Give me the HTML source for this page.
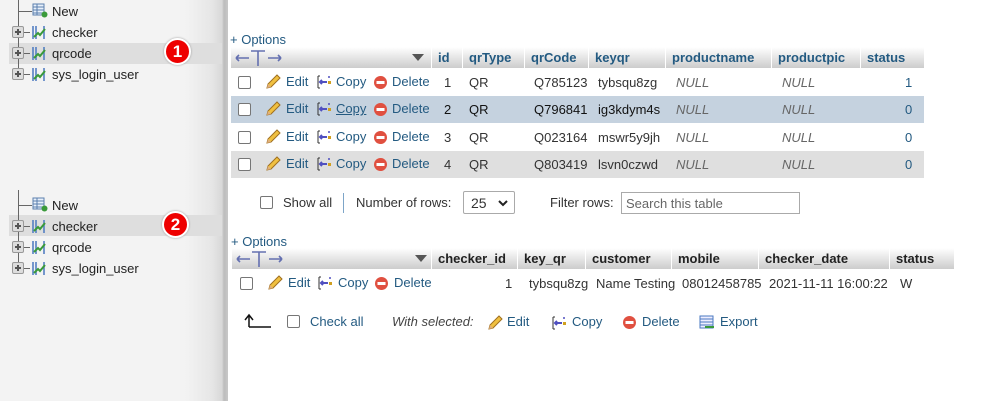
<!DOCTYPE html>
<html><head><meta charset="utf-8"><style>
*{margin:0;padding:0;box-sizing:border-box}
body{width:987px;height:401px;overflow:hidden;background:#fff;font-family:"Liberation Sans",Arial,sans-serif;font-size:13px;color:#333;position:relative}
.a{position:absolute;white-space:nowrap}
#side{position:absolute;left:0;top:0;width:228px;height:401px;background:linear-gradient(to right,#f3f3f3 0,#f3f3f3 185px,#e6e6e6 212px,#d8d8d8 222px,#bcbcbc 224px,#c8c8c8 228px)}
.hl{position:absolute;left:9px;width:213px;height:21px;background:#dedede}
.vl{position:absolute;width:1px;background:#666}
.hlne{position:absolute;height:1px;background:#666}
.plus{position:absolute;width:12px;height:12px;border:1px solid #999;border-radius:2px;background:#ddd}
.plus:before{content:"";position:absolute;left:2px;top:4px;width:6px;height:2px;background:#555}
.plus:after{content:"";position:absolute;left:4px;top:2px;width:2px;height:6px;background:#555}
.ti{position:absolute;width:16px;height:15px}
.badge{position:absolute;width:27px;height:27px;border-radius:50%;background:#e00;border:2px solid #fff;box-shadow:0 0 2px #999;color:#fff;font-weight:bold;font-size:17px;text-align:center;line-height:23px}
.hdr{position:absolute;height:21px;background:linear-gradient(#fff,#ccc)}
.th{position:absolute;top:0;height:21px;line-height:21px;font-weight:bold;color:#235a81;padding-left:6px;border-left:1px solid #fff}
.cb{position:absolute;width:13px;height:13px;border:1px solid #767676;border-radius:2px;background:#fff}
.lk{color:#235a81}
.null{font-style:italic;color:#666}
</style></head><body>
<div id="side">
 <div class="hl" style="top:43px"></div>
 <div class="hl" style="top:215px"></div>
 <div class="vl" style="left:18px;top:0;height:75px"></div>
 <div class="hlne" style="left:18px;top:11px;width:14px"></div>
 <svg class="ti" style="left:32px;top:3px" viewBox="0 0 16 15"><rect x="1" y="1" width="11" height="11" fill="#e8f0fa" stroke="#5b7fae"/><path d="M1 4h11M1 7h11M1 10h11M5 1v11" stroke="#5b7fae"/><circle cx="12.5" cy="11.5" r="3" fill="#3a9a3a"/></svg>
 <span class="a" style="left:52px;top:4px;color:#222">New</span>
 <div class="plus" style="left:12px;top:26px"></div><div class="hlne" style="left:24px;top:32px;width:6px"></div>
 <svg class="ti" style="left:31px;top:25px" viewBox="0 0 16 15"><path d="M2 1v13M5 1v13M13 1v13" stroke="#4a78c0" stroke-width="1.5"/><path d="M3 12l4-4 2 2 5-6" stroke="#3a9a3a" stroke-width="2" fill="none"/></svg>
 <span class="a" style="left:52px;top:25px;color:#222">checker</span>
 <div class="plus" style="left:12px;top:47px"></div><div class="hlne" style="left:24px;top:53px;width:6px"></div>
 <svg class="ti" style="left:31px;top:46px" viewBox="0 0 16 15"><path d="M2 1v13M5 1v13M13 1v13" stroke="#4a78c0" stroke-width="1.5"/><path d="M3 12l4-4 2 2 5-6" stroke="#3a9a3a" stroke-width="2" fill="none"/></svg>
 <span class="a" style="left:52px;top:46px;color:#222">qrcode</span>
 <div class="plus" style="left:12px;top:68px"></div><div class="hlne" style="left:24px;top:74px;width:6px"></div>
 <svg class="ti" style="left:31px;top:67px" viewBox="0 0 16 15"><path d="M2 1v13M5 1v13M13 1v13" stroke="#4a78c0" stroke-width="1.5"/><path d="M3 12l4-4 2 2 5-6" stroke="#3a9a3a" stroke-width="2" fill="none"/></svg>
 <span class="a" style="left:52px;top:67px;color:#222">sys_login_user</span>
 <div class="badge" style="left:164px;top:38px">1</div>
 <div class="vl" style="left:18px;top:190px;height:80px"></div>
 <div class="hlne" style="left:18px;top:205px;width:14px"></div>
 <svg class="ti" style="left:32px;top:197px" viewBox="0 0 16 15"><rect x="1" y="1" width="11" height="11" fill="#e8f0fa" stroke="#5b7fae"/><path d="M1 4h11M1 7h11M1 10h11M5 1v11" stroke="#5b7fae"/><circle cx="12.5" cy="11.5" r="3" fill="#3a9a3a"/></svg>
 <span class="a" style="left:52px;top:198px;color:#222">New</span>
 <div class="plus" style="left:12px;top:220px"></div><div class="hlne" style="left:24px;top:226px;width:6px"></div>
 <svg class="ti" style="left:31px;top:219px" viewBox="0 0 16 15"><path d="M2 1v13M5 1v13M13 1v13" stroke="#4a78c0" stroke-width="1.5"/><path d="M3 12l4-4 2 2 5-6" stroke="#3a9a3a" stroke-width="2" fill="none"/></svg>
 <span class="a" style="left:52px;top:219px;color:#222">checker</span>
 <div class="plus" style="left:12px;top:241px"></div><div class="hlne" style="left:24px;top:247px;width:6px"></div>
 <svg class="ti" style="left:31px;top:240px" viewBox="0 0 16 15"><path d="M2 1v13M5 1v13M13 1v13" stroke="#4a78c0" stroke-width="1.5"/><path d="M3 12l4-4 2 2 5-6" stroke="#3a9a3a" stroke-width="2" fill="none"/></svg>
 <span class="a" style="left:52px;top:240px;color:#222">qrcode</span>
 <div class="plus" style="left:12px;top:262px"></div><div class="hlne" style="left:24px;top:268px;width:6px"></div>
 <svg class="ti" style="left:31px;top:261px" viewBox="0 0 16 15"><path d="M2 1v13M5 1v13M13 1v13" stroke="#4a78c0" stroke-width="1.5"/><path d="M3 12l4-4 2 2 5-6" stroke="#3a9a3a" stroke-width="2" fill="none"/></svg>
 <span class="a" style="left:52px;top:261px;color:#222">sys_login_user</span>
 <div class="badge" style="left:162px;top:211px">2</div>
</div>

<span class="a lk" style="left:230px;top:32px">+ Options</span>
<div class="hdr" style="left:231px;top:47px;width:693px">
 <svg class="a" style="left:2px;top:2px" width="50" height="18"><path d="M3 9h13M3 9l3-3M3 9l3 3M35 9h13M48 9l-3-3M48 9l-3 3M18 2h14M25 2v15" stroke="#6470b0" stroke-width="1.6" fill="none"/></svg>
 <svg class="a" style="left:181px;top:7px" width="12" height="8"><path d="M0 0h12L6 7z" fill="#555"/></svg>
 <div class="th" style="left:200px;width:31px">id</div>
 <div class="th" style="left:231px;width:62px">qrType</div>
 <div class="th" style="left:293px;width:64px">qrCode</div>
 <div class="th" style="left:357px;width:77px">keyqr</div>
 <div class="th" style="left:434px;width:106px">productname</div>
 <div class="th" style="left:540px;width:89px">productpic</div>
 <div class="th" style="left:629px;width:64px">status</div>
</div>
<div id="rows"></div>

<div class="cb" style="left:260px;top:196px"></div>
<span class="a" style="left:283px;top:195px">Show all</span>
<div class="a" style="left:343px;top:193px;width:1px;height:20px;background:#7da5c8"></div>
<span class="a" style="left:356px;top:195px">Number of rows:</span>
<div class="a" style="left:463px;top:191px;width:52px;height:23px;border:1px solid #aaa;border-radius:2px;background:#fff"><span class="a" style="left:7px;top:3px;font-size:14px">25</span><svg class="a" style="left:34px;top:8px" width="10" height="7"><path d="M1 1l4 4 4-4" stroke="#222" stroke-width="2" fill="none"/></svg></div>
<span class="a" style="left:550px;top:195px">Filter rows:</span>
<div class="a" style="left:621px;top:192px;width:179px;height:22px;border:1px solid #aaa;background:#fff"><span class="a" style="left:4px;top:3px;color:#666">Search this table</span></div>

<span class="a lk" style="left:231px;top:234px">+ Options</span>
<div class="hdr" style="left:232px;top:248px;width:722px">
 <svg class="a" style="left:2px;top:2px" width="50" height="18"><path d="M3 9h13M3 9l3-3M3 9l3 3M35 9h13M48 9l-3-3M48 9l-3 3M18 2h14M25 2v15" stroke="#6470b0" stroke-width="1.6" fill="none"/></svg>
 <svg class="a" style="left:183px;top:7px" width="12" height="8"><path d="M0 0h12L6 7z" fill="#555"/></svg>
 <div class="th" style="left:199px;width:86px;color:#222">checker_id</div>
 <div class="th" style="left:285px;width:68px;color:#222">key_qr</div>
 <div class="th" style="left:353px;width:86px;color:#222">customer</div>
 <div class="th" style="left:439px;width:87px;color:#222">mobile</div>
 <div class="th" style="left:526px;width:131px;color:#222">checker_date</div>
 <div class="th" style="left:657px;width:65px;color:#222">status</div>
</div>
<div id="rows2"></div>

<svg class="a" style="left:243px;top:313px" width="30" height="16"><path d="M6 14V3M2 7l4-5 4 5M6 14h22" stroke="#111" stroke-width="1.5" fill="none"/></svg>
<div class="cb" style="left:287px;top:315px"></div>
<span class="a lk" style="left:310px;top:314px">Check all</span>
<span class="a" style="left:392px;top:314px;font-style:italic;color:#444">With selected:</span>
<svg class="a" style="left:487px;top:315px" width="16" height="16" viewBox="0 0 16 16"><path d="M2 14l1-4 9-9 3 3-9 9z" fill="#f0c040" stroke="#a07020"/><path d="M2 14l1-4 3 3z" fill="#e0b080"/></svg>
<span class="a lk" style="left:507px;top:314px">Edit</span>
<svg class="a" style="left:551px;top:315px" width="16" height="16" viewBox="0 0 16 16"><path d="M2 2h2M2 14h2M2 2v12" stroke="#333"/><path d="M4 8h7M6 6l-2 2 2 2" stroke="#5050c0" stroke-width="2" fill="none"/><rect x="12" y="7" width="3" height="3" fill="#d0a020"/><circle cx="13" cy="3" r="1" fill="#5050c0"/></svg>
<span class="a lk" style="left:572px;top:314px">Copy</span>
<svg class="a" style="left:622px;top:315px" width="15" height="15"><circle cx="7.5" cy="7.5" r="6.5" fill="#e05040"/><rect x="3.5" y="6" width="8" height="3" fill="#fff"/></svg>
<span class="a lk" style="left:642px;top:314px">Delete</span>
<svg class="a" style="left:699px;top:315px" width="16" height="15"><rect x="1" y="1" width="13" height="12" fill="#eef" stroke="#4a78c0"/><path d="M1 4h13M1 7h13M1 10h13" stroke="#4a78c0"/><path d="M6 12h9" stroke="#3a9a3a" stroke-width="2"/></svg>
<span class="a lk" style="left:720px;top:314px">Export</span>

<script>
function icons(x,y){
 return `<svg class="a" style="left:${x}px;top:${y}px" width="16" height="16" viewBox="0 0 16 16"><path d="M2 14l1-4 9-9 3 3-9 9z" fill="#f0c040" stroke="#a07020"/><path d="M2 14l1-4 3 3z" fill="#e0b080"/></svg>`;
}
function copyI(x,y){return `<svg class="a" style="left:${x}px;top:${y}px" width="16" height="16" viewBox="0 0 16 16"><path d="M2 2h2M2 14h2M2 2v12" stroke="#333"/><path d="M4 8h7M6 6l-2 2 2 2" stroke="#5050c0" stroke-width="2" fill="none"/><rect x="12" y="7" width="3" height="3" fill="#d0a020"/><circle cx="13" cy="3" r="1" fill="#5050c0"/></svg>`}
function delI(x,y){return `<svg class="a" style="left:${x}px;top:${y}px" width="15" height="15"><circle cx="7.5" cy="7.5" r="6.5" fill="#e05040"/><rect x="3.5" y="6" width="8" height="3" fill="#fff"/></svg>`}
var data=[["1","Q785123","tybsqu8zg","1","#fff"],["2","Q796841","ig3kdym4s","0","#c5d2df"],["3","Q023164","mswr5y9jh","0","#fff"],["4","Q803419","lsvn0czwd","0","#dfdfdf"]];
var h="";
data.forEach(function(d,i){
 var t=69+i*27.3, c=t+13;
 var txt=i==1?"#111":"#333";
 h+=`<div class="a" style="left:231px;top:${t}px;width:693px;height:27px;background:${d[4]}"></div>`;
 h+=`<div class="cb" style="left:238px;top:${c-6}px"></div>`;
 h+=icons(265,c-8)+`<span class="a lk" style="left:286px;top:${c-8}px">Edit</span>`;
 h+=copyI(316,c-8)+`<span class="a lk" style="left:336px;top:${c-8}px${i==1?';text-decoration:underline':''}">Copy</span>`;
 h+=delI(373,c-7)+`<span class="a lk" style="left:392px;top:${c-8}px">Delete</span>`;
 h+=`<span class="a" style="left:444px;top:${c-7}px;color:${txt}">${d[0]}</span>`;
 h+=`<span class="a" style="left:469px;top:${c-7}px;color:${txt}">QR</span>`;
 h+=`<span class="a" style="left:534px;top:${c-7}px;color:${txt}">${d[1]}</span>`;
 h+=`<span class="a" style="left:598px;top:${c-7}px;color:${txt}">${d[2]}</span>`;
 h+=`<span class="a null" style="left:676px;top:${c-7}px">NULL</span>`;
 h+=`<span class="a null" style="left:782px;top:${c-7}px">NULL</span>`;
 h+=`<span class="a" style="left:905px;top:${c-7}px;color:#235a81">${d[3]}</span>`;
});
document.getElementById("rows").innerHTML=h;
var c=283,g="";
g+=`<div class="cb" style="left:240px;top:${c-6}px"></div>`;
g+=icons(267,c-8)+`<span class="a lk" style="left:288px;top:${c-8}px">Edit</span>`;
g+=copyI(317,c-8)+`<span class="a lk" style="left:338px;top:${c-8}px">Copy</span>`;
g+=delI(374,c-7)+`<span class="a lk" style="left:394px;top:${c-8}px">Delete</span>`;
g+=`<span class="a" style="left:505px;top:${c-7}px">1</span>`;
g+=`<span class="a" style="left:529px;top:${c-7}px">tybsqu8zg</span>`;
g+=`<span class="a" style="left:596px;top:${c-7}px">Name Testing</span>`;
g+=`<span class="a" style="left:682px;top:${c-7}px">08012458785</span>`;
g+=`<span class="a" style="left:769px;top:${c-7}px">2021-11-11 16:00:22</span>`;
g+=`<span class="a" style="left:900px;top:${c-7}px">W</span>`;
document.getElementById("rows2").innerHTML=g;
</script>
</body></html>
